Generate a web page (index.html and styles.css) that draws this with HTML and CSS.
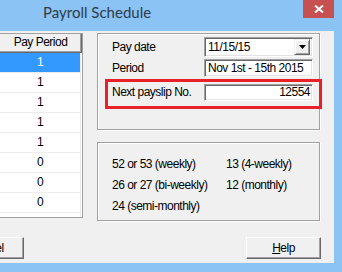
FILE: index.html
```html
<!DOCTYPE html>
<html lang="en">
<head>
  <meta charset="UTF-8">
  <title>Payroll Schedule</title>
  <link rel="stylesheet" href="styles.css">
</head>
<body>
  <div class="window">
    <div class="titlebar">
      <span class="title">Payroll Schedule</span>
      <span class="close">
        <svg width="10" height="8" viewBox="0 0 10 8"><path d="M1 0.5 L9 7.5 M9 0.5 L1 7.5" stroke="#fff" stroke-width="2"/></svg>
      </span>
    </div>

    <div class="frame">
      <div class="client">
        <div class="main">
          <!-- Tabelle mit Perioden -->
          <div class="grid">
            <div class="grid-head">Pay Period</div>
            <div class="cell selected">1</div>
            <div class="cell">1</div>
            <div class="cell">1</div>
            <div class="cell">1</div>
            <div class="cell">1</div>
            <div class="cell">0</div>
            <div class="cell">0</div>
            <div class="cell">0</div>
            <div class="cell"></div>
          </div>

          <div class="side">
            <div class="group">
              <div class="row">
                <span class="label">Pay date</span>
                <div class="field combo">
                  <span>11/15/15</span>
                  <span class="drop">
                    <svg width="7" height="4" viewBox="0 0 7 4"><path d="M0 0 H7 L3.5 4 Z" fill="#000"/></svg>
                  </span>
                </div>
              </div>
              <div class="row row-short">
                <span class="label">Period</span>
                <div class="field">Nov 1st - 15th 2015</div>
              </div>
              <div class="highlight">
                <span class="label">Next payslip No.</span>
                <div class="field number">12554</div>
              </div>
            </div>

            <div class="group info">
              <span>52 or 53 (weekly)</span>
              <span>13 (4-weekly)</span>
              <span>26 or 27 (bi-weekly)</span>
              <span>12 (monthly)</span>
              <span>24 (semi-monthly)</span>
            </div>
          </div>
        </div>

        <div class="buttons">
          <button class="btn cancel">Cancel</button>
          <button class="btn"><u>H</u>elp</button>
        </div>
      </div>
    </div>
  </div>
</body>
</html>
```

FILE: styles.css
```css
* {
  box-sizing: border-box;
}

body {
  margin: 0;
  background-color: #8ac3f4;
  font-family: "Liberation Sans", Arial, sans-serif;
  font-size: 12px;
  letter-spacing: -0.5px;
  color: #000;
}

.window {
  width: 342px;
  height: 272px;
  display: flex;
  flex-direction: column;
  overflow: hidden;
}

.titlebar {
  height: 31px;
  display: flex;
  align-items: flex-start;
}

.title {
  margin-left: 43px;
  font-family: Lato, "Noto Sans", sans-serif;
  font-size: 15px;
  letter-spacing: 0;
  line-height: 24px;
  color: #2f3b4a;
}

.close {
  margin-left: auto;
  margin-right: 8px;
  width: 31px;
  height: 18px;
  background-color: #c75050;
  display: flex;
  align-items: center;
  justify-content: center;
}

.frame {
  flex: 1;
  display: flex;
  padding: 0 8px 9px 0;
}

.client {
  flex: 1;
  display: flex;
  flex-direction: column;
  padding-top: 2px;
  background-color: #f0f0f0;
}

.main {
  display: flex;
  align-items: flex-start;
}

/* Tabelle */
.grid {
  width: 83px;
  height: 185px;
  border: 1px solid #a0a0a0;
  border-left: none;
  background-color: #fff;
  overflow: hidden;
}

.grid-head {
  width: 82px;
  height: 19px;
  line-height: 17px;
  text-align: center;
  background-color: #f0f0f0;
  border-right: 1px solid #696969;
  border-bottom: 1px solid #696969;
  box-shadow: inset -1px -1px #a0a0a0;
}

.cell {
  width: 81px;
  height: 20px;
  line-height: 19px;
  text-align: center;
  border-right: 1px solid #ececec;
  border-bottom: 1px solid #ececec;
}

.cell.selected {
  background-color: #3399ff;
  color: #fff;
}

/* rechte Seite */
.side {
  width: 223px;
  margin-left: 14px;
}

.group {
  border: 1px solid #a0a0a0;
  box-shadow: inset 1px 1px #fff, 1px 1px #fff;
  padding: 3px 6px 20px 14px;
}

.row {
  display: flex;
  align-items: center;
  height: 20px;
  margin-bottom: 2px;
}

.row-short {
  height: 18px;
}

.label {
  width: 92px;
  flex-shrink: 0;
}

.field {
  flex: 1;
  height: 100%;
  display: flex;
  align-items: center;
  padding: 0 3px;
  white-space: nowrap;
  background-color: #fff;
  border: 1px solid;
  border-color: #a0a0a0 #fff #fff #a0a0a0;
  box-shadow: inset 1px 1px #696969, inset -1px -1px #e3e3e3;
}

.combo {
  justify-content: space-between;
  padding-right: 2px;
}

.drop {
  width: 16px;
  height: 16px;
  display: flex;
  align-items: center;
  justify-content: center;
  background-color: #f0f0f0;
  border: 1px solid;
  border-color: #f0f0f0 #696969 #696969 #f0f0f0;
  box-shadow: inset 1px 1px #fff, inset -1px -1px #a0a0a0;
}

.highlight {
  display: flex;
  align-items: center;
  height: 30px;
  margin: 0 -9px 0 -7px;
  padding: 1px 6px 5px 4px;
  border: 3px solid #e8202a;
}

.number {
  height: 17px;
  justify-content: flex-end;
  padding-right: 2px;
}

.info {
  margin-top: 12px;
  height: 79px;
  padding: 11px 0 0 14px;
  display: grid;
  grid-template-columns: 114px auto;
  align-content: start;
  line-height: 21px;
  white-space: nowrap;
}

/* Knöpfe */
.buttons {
  display: flex;
  justify-content: space-between;
  margin-top: 16px;
  padding-right: 13px;
}

.btn {
  width: 75px;
  height: 22px;
  padding: 0;
  font-family: inherit;
  font-size: 12px;
  letter-spacing: -0.5px;
  color: #000;
  background-color: #f0f0f0;
  border: 1px solid;
  border-color: #fff #696969 #696969 #fff;
  box-shadow: inset -1px -1px #a0a0a0;
}

.cancel {
  margin-left: -51px;
}
```
